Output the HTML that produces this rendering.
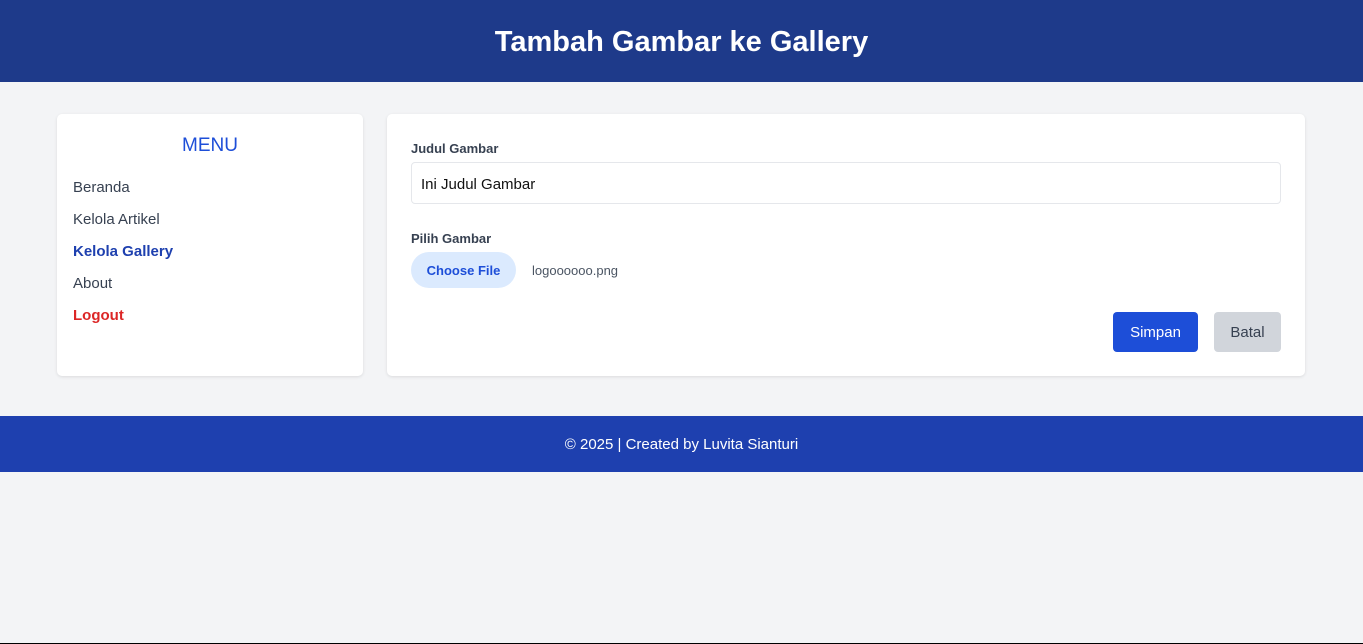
<!DOCTYPE html>
<html><head><style>
*{box-sizing:border-box;margin:0;padding:0}
body{width:1363px;height:644px;background:#f3f4f6;font-family:"Liberation Sans",sans-serif;position:relative;overflow:hidden}
header{height:82px;background:#1e3a8a;color:#fff;text-align:center;font-weight:bold;font-size:29px;line-height:84px}
.side{position:absolute;left:57px;top:114px;width:306px;height:262px;background:#fff;border-radius:5px;box-shadow:0 1px 3px rgba(0,0,0,.1)}
.side h2{text-align:center;color:#1d4ed8;font-size:19px;font-weight:normal;margin-top:21px;height:26px}
.side a{position:absolute;left:16px;font-size:15px;color:#374151}
.main{position:absolute;left:387px;top:114px;width:918px;height:262px;background:#fff;border-radius:5px;box-shadow:0 1px 3px rgba(0,0,0,.1)}
.lbl{position:absolute;left:24px;font-size:13px;font-weight:bold;color:#374151}
.inp{position:absolute;left:24px;top:48px;width:870px;height:42px;border:1px solid #e5e7eb;border-radius:4px;font-size:15px;padding-left:9px;line-height:43px;color:#111}
.file{position:absolute;left:24px;top:138px;width:105px;height:36px;border-radius:18px;background:#dbeafe;color:#1d4ed8;font-weight:bold;font-size:13px;text-align:center;line-height:37px}
.fn{position:absolute;left:145px;top:149px;font-size:13px;color:#4b5563}
.b1{position:absolute;left:726px;top:198px;width:85px;height:40px;background:#1d4ed8;color:#fff;border-radius:4px;text-align:center;line-height:42px;font-size:15px}
.b2{position:absolute;left:827px;top:198px;width:67px;height:40px;background:#d1d5db;color:#374151;border-radius:4px;text-align:center;line-height:42px;font-size:15px}
footer{position:absolute;top:416px;left:0;width:1363px;height:56px;background:#1e40af;color:#fff;text-align:center;line-height:58px;font-size:15px}
.bl{position:absolute;left:0;top:643px;width:1363px;height:1px;background:#000}
</style></head><body>
<header>Tambah Gambar ke Gallery</header>
<div class="side"><h2>MENU</h2>
<a style="top:65px">Beranda</a>
<a style="top:97px">Kelola Artikel</a>
<a style="top:129px;color:#1e40af;font-weight:bold">Kelola Gallery</a>
<a style="top:161px">About</a>
<a style="top:193px;color:#dc2626;font-weight:bold">Logout</a></div>
<div class="main">
<div class="lbl" style="top:27px">Judul Gambar</div>
<div class="inp">Ini Judul Gambar</div>
<div class="lbl" style="top:117px">Pilih Gambar</div>
<div class="file">Choose File</div><div class="fn">logoooooo.png</div>
<div class="b1">Simpan</div><div class="b2">Batal</div>
</div>
<footer>© 2025 | Created by Luvita Sianturi</footer>
<div class="bl"></div>
</body></html>
